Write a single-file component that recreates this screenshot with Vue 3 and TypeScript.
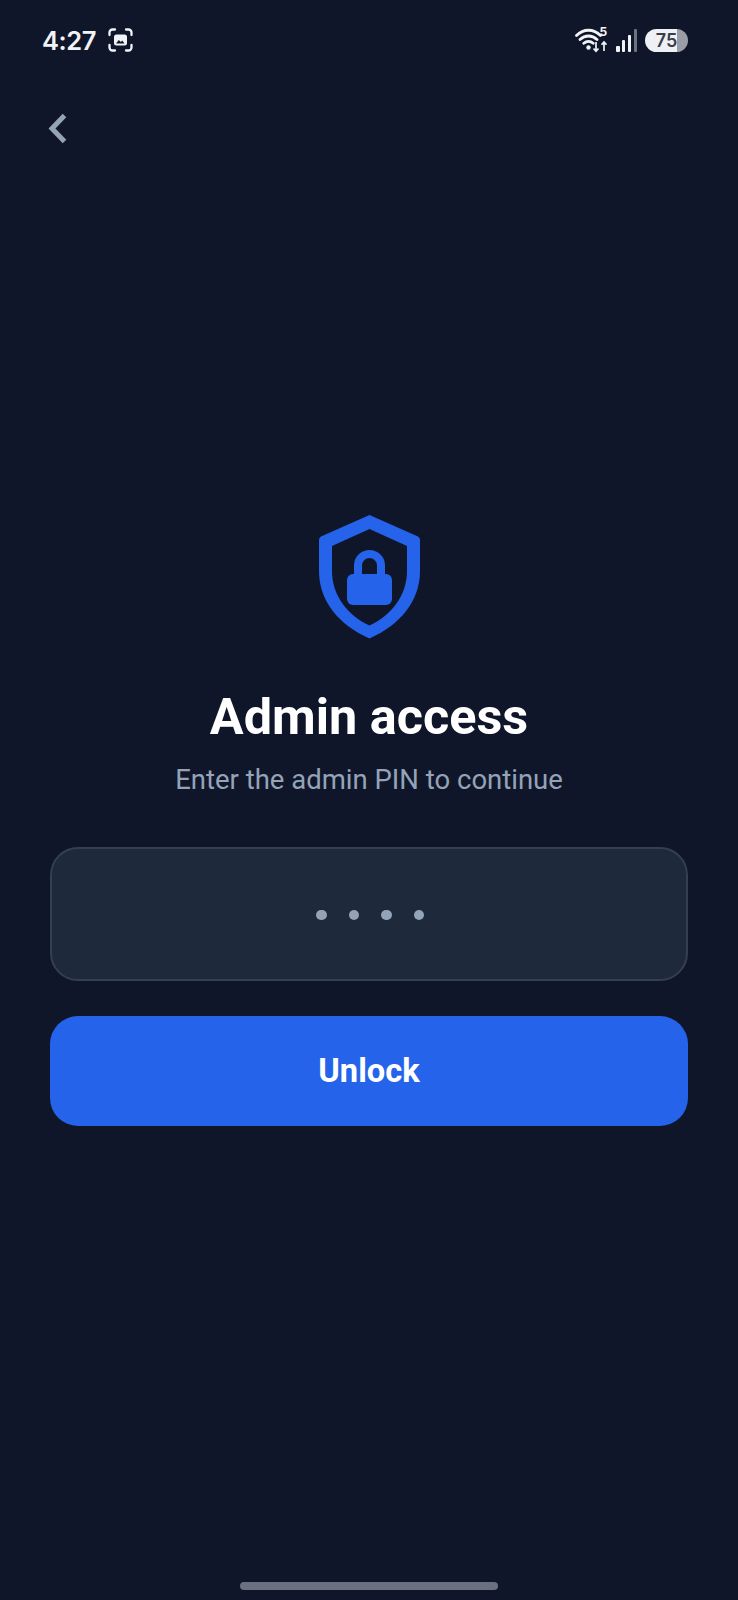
<script setup lang="ts">
const dots: number[] = [1, 2, 3, 4]
</script>

<template>
  <div class="screen">
    <header class="status">
      <div class="status-left">
        <span class="time">4:27</span>
        <svg class="shot" width="25" height="24" viewBox="0 0 25 24" fill="none">
          <path d="M1.500 7V4.500a3 3 0 0 1 3-3H7M18 1.500h2.500a3 3 0 0 1 3 3V7M23.500 17v2.500a3 3 0 0 1-3 3H18M7 22.500H4.500a3 3 0 0 1-3-3V17" stroke="#f1f3f8" stroke-width="2.300" stroke-linecap="round"/>
          <rect x="6" y="6.500" width="13" height="11" rx="2.500" fill="#f1f3f8"/>
          <path d="M8 15.500l2.800-3.500 2 2 1.400-1.400 2.300 2.900z" fill="#10162a"/>
        </svg>
      </div>
      <div class="status-right">
        <div class="wifi">
          <svg width="32" height="26" viewBox="0 0 32 26" fill="none">
            <path d="M1.500 8.500C8.500 1.500 18.500 1.500 25.500 8.500M5 12.500c5-4.700 12-4.700 17 0M8.800 16.300c2.800-2.400 6.600-2.400 9.400 0" stroke="#f1f3f8" stroke-width="2.800" stroke-linecap="round"/>
            <circle cx="13.500" cy="20.500" r="2.200" fill="#f1f3f8"/>
            <path d="M21 15v9M18.500 21.500l2.500 2.800 2.500-2.800" stroke="#f1f3f8" stroke-width="1.700"/>
            <path d="M29 24v-9M26.500 17.800l2.500-2.800 2.500 2.800" stroke="#f1f3f8" stroke-width="1.700"/>
          </svg>
          <span class="five">5</span>
        </div>
        <div class="signal">
          <i class="bar b1"></i>
          <i class="bar b2"></i>
          <i class="bar b3"></i>
          <i class="bar b4"></i>
        </div>
        <div class="battery"><span>75</span></div>
      </div>
    </header>

    <button class="back" type="button" aria-label="Back">
      <svg width="28" height="36" viewBox="0 0 28 36" fill="none">
        <path d="M22.500 5.500L10 18.500l12.500 13" stroke="#94a3b8" stroke-width="5"/>
      </svg>
    </button>

    <main class="content">
      <svg class="shield" width="103" height="124" viewBox="0 0 103 124">
        <path fill-rule="evenodd" fill="#2563eb" d="M51.500 0L100 21.500Q102 22.500 102 25V56C102 86 82 110 51.500 123.500C21 110 1 86 1 56V25Q1 22.500 3 21.500ZM51.500 14L14 31V56C14 80 29 100 51.500 110.500C74 100 89 80 89 56V31Z"/>
        <path d="M40 60V50.500a11.500 11.500 0 0 1 23 0V60" fill="none" stroke="#2563eb" stroke-width="8"/>
        <rect x="29" y="59" width="45" height="31" rx="6" fill="#2563eb"/>
      </svg>
      <h1 class="title">Admin access</h1>
      <p class="subtitle">Enter the admin PIN to continue</p>
      <div class="pin">
        <span v-for="d in dots" :key="d" class="dot"></span>
      </div>
      <button class="unlock" type="button">Unlock</button>
    </main>

    <div class="home"></div>
  </div>
</template>

<style>
html, body { margin: 0; background: #10162a; }
</style>

<style scoped>
.screen {
  width: 738px;
  height: 1600px;
  background: #10162a;
  display: flex;
  flex-direction: column;
  font-family: Roboto, "Liberation Sans", sans-serif;
  overflow: hidden;
}
.status {
  height: 80px;
  padding: 0 50px 0 42px;
  display: flex;
  justify-content: space-between;
  align-items: center;
  flex-shrink: 0;
}
.status-left { display: flex; align-items: center; gap: 12px; }
.time {
  color: #f1f3f8;
  font-family: Inter, Roboto, sans-serif;
  font-size: 25.500px;
  font-weight: 600;
  letter-spacing: -0.4px;
}
.status-right { display: flex; align-items: center; gap: 8px; }
.wifi { position: relative; width: 32px; height: 26px; margin-right: 1px; }
.wifi svg { display: block; }
.five {
  position: absolute;
  right: 0;
  top: -2px;
  color: #f1f3f8;
  font-size: 12px;
  line-height: 14px;
  font-weight: 700;
  font-family: Inter, sans-serif;
}
.signal { display: flex; align-items: flex-end; gap: 2.300px; height: 23px; }
.bar { display: block; width: 3.500px; border-radius: 1px; background: #f1f3f8; }
.b1 { height: 6px; }
.b2 { height: 12px; }
.b3 { height: 17px; }
.b4 { height: 23px; background: #6b7280; }
.battery {
  width: 43px;
  height: 23px;
  border-radius: 12px;
  background: linear-gradient(90deg, #eef0f5 0 75%, #9a9da6 75% 100%);
  display: flex;
  align-items: center;
  justify-content: center;
}
.battery span {
  color: #3a3d46;
  font-family: Inter, sans-serif;
  font-size: 18px;
  font-weight: 600;
}
.back {
  align-self: flex-start;
  margin: 30px 0 0 42px;
  padding: 0;
  background: none;
  border: none;
  height: 36px;
  flex-shrink: 0;
}
.back svg { display: block; }
.content {
  display: flex;
  flex-direction: column;
  align-items: center;
  padding: 0 50px;
  margin-top: 369px;
}
.shield { display: block; }
.title {
  margin: 50px 0 0;
  color: #ffffff;
  font-size: 50.400px;
  line-height: 56px;
  font-weight: 700;
}
.subtitle {
  margin: 17px 0 0;
  color: #94a3b8;
  font-size: 27.500px;
  line-height: 36px;
  font-weight: 400;
}
.pin {
  box-sizing: border-box;
  width: 638px;
  height: 134px;
  margin-top: 49px;
  padding-left: 2px;
  background: #1e293b;
  border: 2px solid #333f54;
  border-radius: 28px;
  display: flex;
  align-items: center;
  justify-content: center;
  gap: 22px;
}
.dot {
  width: 10.500px;
  height: 10.500px;
  margin-top: 2px;
  border-radius: 50%;
  background: #94a3b8;
}
.unlock {
  width: 638px;
  height: 110px;
  margin-top: 35px;
  background: #2563eb;
  color: #ffffff;
  border: none;
  border-radius: 28px;
  font-family: inherit;
  font-size: 32.700px;
  font-weight: 700;
}
.home {
  width: 258px;
  height: 8px;
  border-radius: 4px;
  background: #6b7080;
  margin: auto auto 10px;
  flex-shrink: 0;
}
</style>
